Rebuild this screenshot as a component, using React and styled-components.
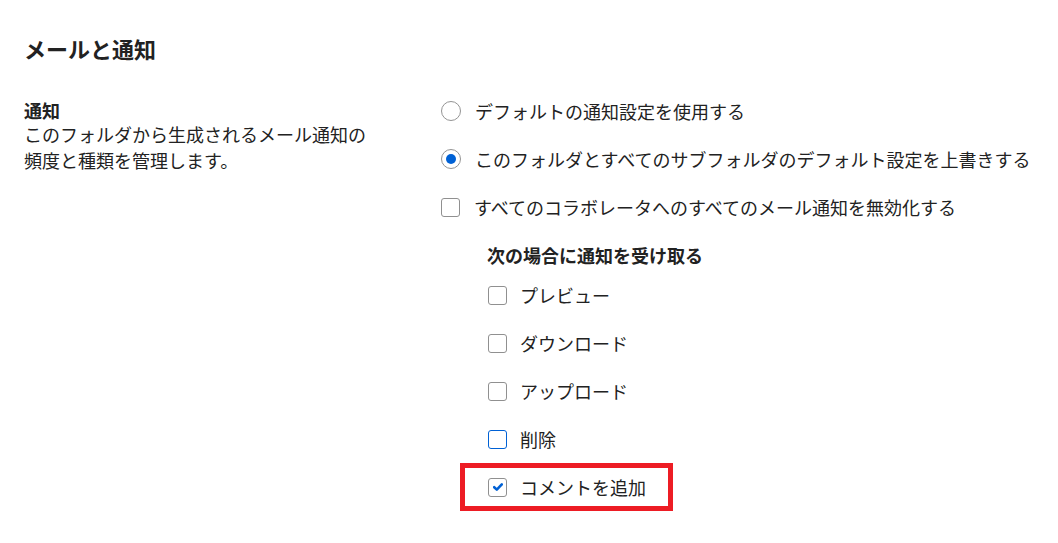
import React from "react"
import styled, { createGlobalStyle } from "styled-components"

const GlobalStyle = createGlobalStyle`
  html, body {
    margin: 0;
    padding: 0;
    background: #fff;
  }
  body {
    font-family: "Noto Sans CJK JP", "Noto Sans", sans-serif;
    color: #222;
  }
`

const Page = styled.div`
  padding: 32px 24px 0;
  width: 1058px;
  height: 543px;
  box-sizing: border-box;
`

const Title = styled.h2`
  margin: 0;
  font-size: 22px;
  line-height: 32px;
  font-weight: 700;
`

const Section = styled.div`
  display: grid;
  grid-template-columns: 417px 1fr;
  margin-top: 23px;
`

const Intro = styled.div`
  padding-top: 12px;
`

const Label = styled.div`
  font-size: 18px;
  line-height: 22px;
  font-weight: 700;
`

const Description = styled.p`
  margin: 0;
  max-width: 350px;
  font-size: 18px;
  line-height: 26px;
`

const Options = styled.div`
  display: flex;
  flex-direction: column;
`

const OptionRow = styled.label`
  display: flex;
  align-items: center;
  height: 48px;
  font-size: 18px;
`

const Radio = styled.span`
  width: 20px;
  height: 20px;
  box-sizing: border-box;
  border: 1.5px solid #949494;
  border-radius: 50%;
  margin-right: 14px;
  display: flex;
  align-items: center;
  justify-content: center;
  flex-shrink: 0;

  &::after {
    content: "";
    width: 10px;
    height: 10px;
    border-radius: 50%;
    background: ${({ $checked }) => ($checked ? "#0061d5" : "transparent")};
  }
`

const Box = styled.span`
  width: 19px;
  height: 19px;
  box-sizing: border-box;
  border: 1px solid ${({ $focus }) => ($focus ? "#0061d5" : "#909090")};
  border-radius: 3px;
  margin-right: ${({ $gap }) => $gap}px;
  display: flex;
  align-items: center;
  justify-content: center;
  flex-shrink: 0;
  background: #fff;
`

const SubHeading = styled.div`
  margin: 8px 0 0 46px;
  font-size: 18px;
  line-height: 32px;
  font-weight: 700;
`

const SubList = styled.div`
  display: flex;
  flex-direction: column;
  margin-left: 19px;
`

const SubRow = styled.label`
  display: flex;
  align-items: center;
  width: max-content;
  height: 48px;
  box-sizing: border-box;
  padding: 0 22px 0 23px;
  border: 5px solid ${({ $highlighted }) => ($highlighted ? "#ed1c24" : "transparent")};
  font-size: 18px;
`

const Check = () => (
  <svg width="10" height="8" viewBox="0 0 10 8">
    <path d="M1.2 4.2 L3.8 6.6 L8.8 1.4" fill="none" stroke="#0061d5" strokeWidth="2.6" strokeLinecap="round" strokeLinejoin="round" />
  </svg>
)

const events = [
  { text: "プレビュー" },
  { text: "ダウンロード" },
  { text: "アップロード" },
  { text: "削除", focus: true },
  { text: "コメントを追加", checked: true, highlighted: true },
]

export default function App() {
  return (
    <>
      <GlobalStyle />
      <Page>
        <Title>メールと通知</Title>
        <Section>
          <Intro>
            <Label>通知</Label>
            <Description>
              このフォルダから生成されるメール通知の頻度と種類を管理します。
            </Description>
          </Intro>
          <div>
            <Options>
              <OptionRow>
                <Radio />
                デフォルトの通知設定を使用する
              </OptionRow>
              <OptionRow>
                <Radio $checked />
                このフォルダとすべてのサブフォルダのデフォルト設定を上書きする
              </OptionRow>
              <OptionRow>
                <Box $gap={14} />
                すべてのコラボレータへのすべてのメール通知を無効化する
              </OptionRow>
            </Options>
            <SubHeading>次の場合に通知を受け取る</SubHeading>
            <SubList>
              {events.map((e) => (
                <SubRow key={e.text} $highlighted={e.highlighted}>
                  <Box $gap={13} $focus={e.focus}>
                    {e.checked && <Check />}
                  </Box>
                  {e.text}
                </SubRow>
              ))}
            </SubList>
          </div>
        </Section>
      </Page>
    </>
  )
}
